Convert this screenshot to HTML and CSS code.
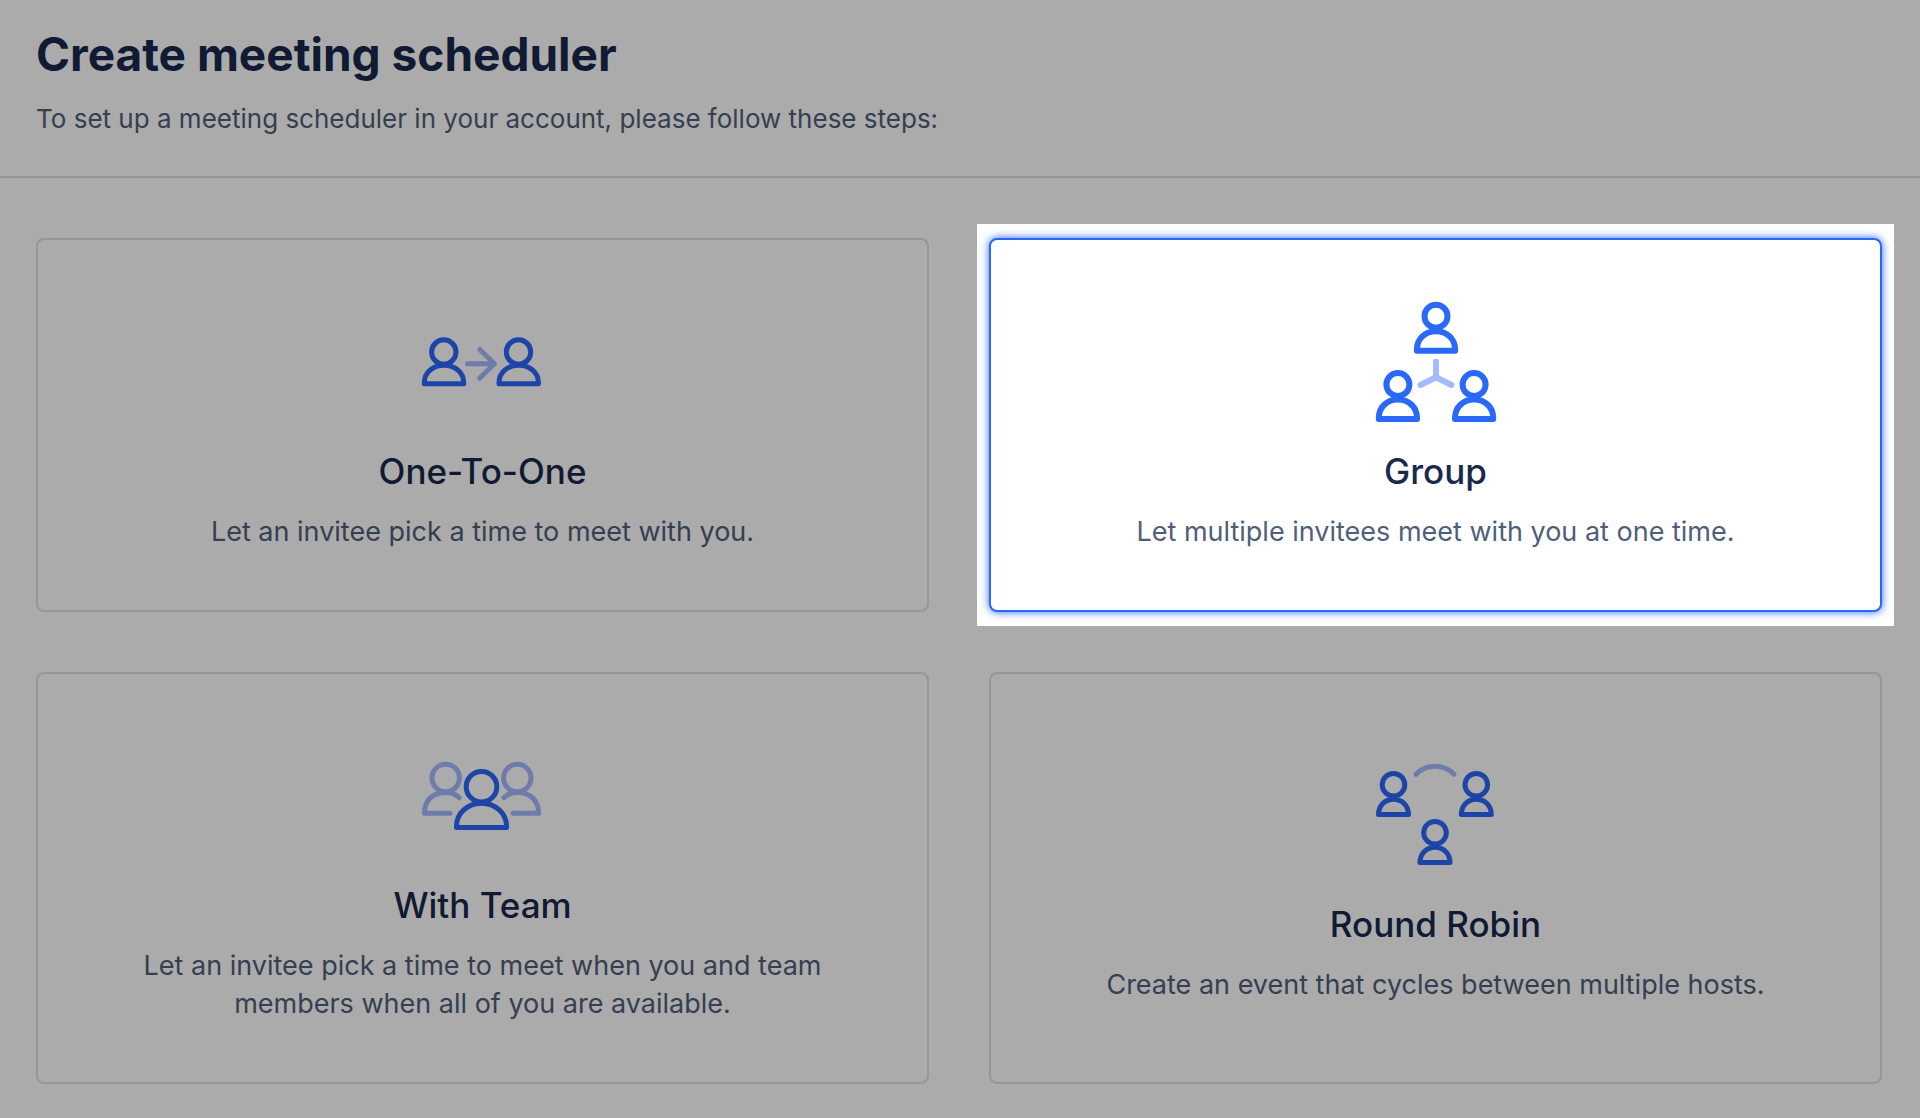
FILE: index.html
```html
<!DOCTYPE html>
<html lang="en">
<head>
<meta charset="utf-8">
<meta name="viewport" content="width=device-width, initial-scale=1">
<title>Create meeting scheduler</title>
<link rel="stylesheet" href="styles.css">
</head>
<body>
<div class="page">
  <header class="page-header">
    <h1 class="page-title">Create meeting scheduler</h1>
    <p class="page-intro">To set up a meeting scheduler in your account, please follow these steps:</p>
  </header>

  <main class="options">
    <button type="button" class="card">
      <svg class="icon" viewBox="0 0 120 120" aria-hidden="true">
        <g class="strong">
          <circle cx="20.8" cy="50" r="12.2"/>
          <path d="M1.3 81.7V80.5C1.3 70.5 10 63.2 21 63.2S40.7 70.5 40.7 80.5V81.7Z"/>
          <circle cx="95.5" cy="50" r="12.2"/>
          <path d="M76 81.7V80.5C76 70.5 84.7 63.2 95.7 63.2S115.4 70.5 115.4 80.5V81.7Z"/>
        </g>
        <path class="soft" d="M44.5 61.7H71M56.7 47.5L71.5 61.7L56.7 76"/>
      </svg>
      <span class="card-title">One-To-One</span>
      <span class="card-text">Let an invitee pick a time to meet with you.</span>
    </button>

    <button type="button" class="card card-active">
      <svg class="icon icon-bold" viewBox="0 0 120 120" aria-hidden="true">
        <g class="strong">
          <circle cx="60" cy="14.3" r="11.5"/>
          <path d="M40.9 48.8V47.5C40.9 37 49 29.2 60 29.2S79.1 37 79.1 47.5V48.8Z"/>
          <circle cx="21.9" cy="82.6" r="11.5"/>
          <path d="M2.8 117.1V115.8C2.8 105.3 10.9 97.5 21.9 97.5S41 105.3 41 115.8V117.1Z"/>
          <circle cx="98.1" cy="82.6" r="11.5"/>
          <path d="M79 117.1V115.8C79 105.3 87.1 97.5 98.1 97.5S117.2 105.3 117.2 115.8V117.1Z"/>
        </g>
        <path class="soft" d="M60 59.8V75.2M44.5 83L60 75.2L75.5 83"/>
      </svg>
      <span class="card-title">Group</span>
      <span class="card-text">Let multiple invitees meet with you at one time.</span>
    </button>

    <button type="button" class="card">
      <svg class="icon" viewBox="0 0 120 120" aria-hidden="true">
        <g class="soft">
          <circle cx="22.7" cy="42" r="13.7"/>
          <path d="M27 77.3H1.4C1.4 64 10 56.5 22.7 56.5C28.5 56.5 33 58.5 36.2 61.7"/>
          <circle cx="94.3" cy="42" r="13.7"/>
          <path d="M90 77.3H115.6C115.6 64 107 56.5 94.3 56.5C88.5 56.5 84 58.5 80.8 61.7"/>
        </g>
        <g class="strong">
          <circle cx="58.5" cy="50.7" r="15.3"/>
          <path d="M33.5 91.5V90C33.5 77.5 44.5 67.3 58.5 67.3S83.5 77.5 83.5 90V91.5Z"/>
        </g>
      </svg>
      <span class="card-title">With Team</span>
      <span class="card-text">Let an invitee pick a time to meet when you and team members when all of you are available.</span>
    </button>

    <button type="button" class="card">
      <svg class="icon" viewBox="0 0 120 120" aria-hidden="true">
        <g class="strong">
          <circle cx="17.5" cy="29.7" r="11.3"/>
          <path d="M2.5 59.5C2.5 50.5 9 44.2 17.5 44.2S32.5 50.5 32.5 59.5Z"/>
          <circle cx="100.3" cy="29.7" r="11.3"/>
          <path d="M85.3 59.5C85.3 50.5 91.8 44.2 100.3 44.2S115.3 50.5 115.3 59.5Z"/>
          <circle cx="59" cy="77.7" r="11.3"/>
          <path d="M44 107.5C44 98.5 50.5 92.2 59 92.2S74 98.5 74 107.5Z"/>
        </g>
        <path class="soft" d="M40 19.3A26.6 26.6 0 0 1 78 19.3"/>
      </svg>
      <span class="card-title">Round Robin</span>
      <span class="card-text">Create an event that cycles between multiple hosts.</span>
    </button>
  </main>
</div>
</body>
</html>
```
FILE: styles.css
```css
* {
  box-sizing: border-box;
}

body {
  margin: 0;
  background: #fff;
  color: #19294c;
  font-family: Inter, "Liberation Sans", sans-serif;
}

.page {
  position: relative;
  min-height: 100vh;
  overflow: hidden;
}

.page-header {
  padding: 24px 36px 38px;
  border-bottom: 2px solid #dfdfe6;
}

.page-title {
  margin: 0 0 16px;
  font-size: 46px;
  line-height: 60px;
  font-weight: 700;
}

.page-intro {
  margin: 0;
  color: #505f79;
  font-size: 26px;
  line-height: 38px;
}

.options {
  display: grid;
  grid-template-columns: 1fr 1fr;
  gap: 60px;
  padding: 60px 38px 34px 36px;
}

.card {
  display: flex;
  flex-direction: column;
  align-items: center;
  justify-content: center;
  padding: 62px 98px 59px;
  border: 2px solid #dfdfe6;
  border-radius: 8px;
  background: #fff;
  color: inherit;
  font: inherit;
  text-align: center;
  cursor: pointer;
}

.card-active {
  position: relative;
  border-color: #2a68f9;
  box-shadow: 0 0 8px #2a68f9;
}

/* Dims the page around the highlighted card */
.card-active::after {
  content: "";
  position: absolute;
  inset: -16px -14px;
  box-shadow: 0 0 0 200vmax rgba(0, 0, 0, 0.33);
  pointer-events: none;
}

.icon {
  width: 120px;
  height: 120px;
  margin-bottom: 27px;
  overflow: visible;
  fill: none;
  stroke-width: 5px;
  stroke-linecap: round;
  stroke-linejoin: round;
}

.icon-bold {
  stroke-width: 6px;
}

.strong {
  stroke: #2a68f9;
}

.soft {
  stroke: #a3baff;
}

.card-title {
  margin-bottom: 20px;
  font-size: 35px;
  line-height: 44px;
  font-weight: 500;
}

.card-text {
  color: #505f79;
  font-size: 27px;
  line-height: 38px;
}
```
